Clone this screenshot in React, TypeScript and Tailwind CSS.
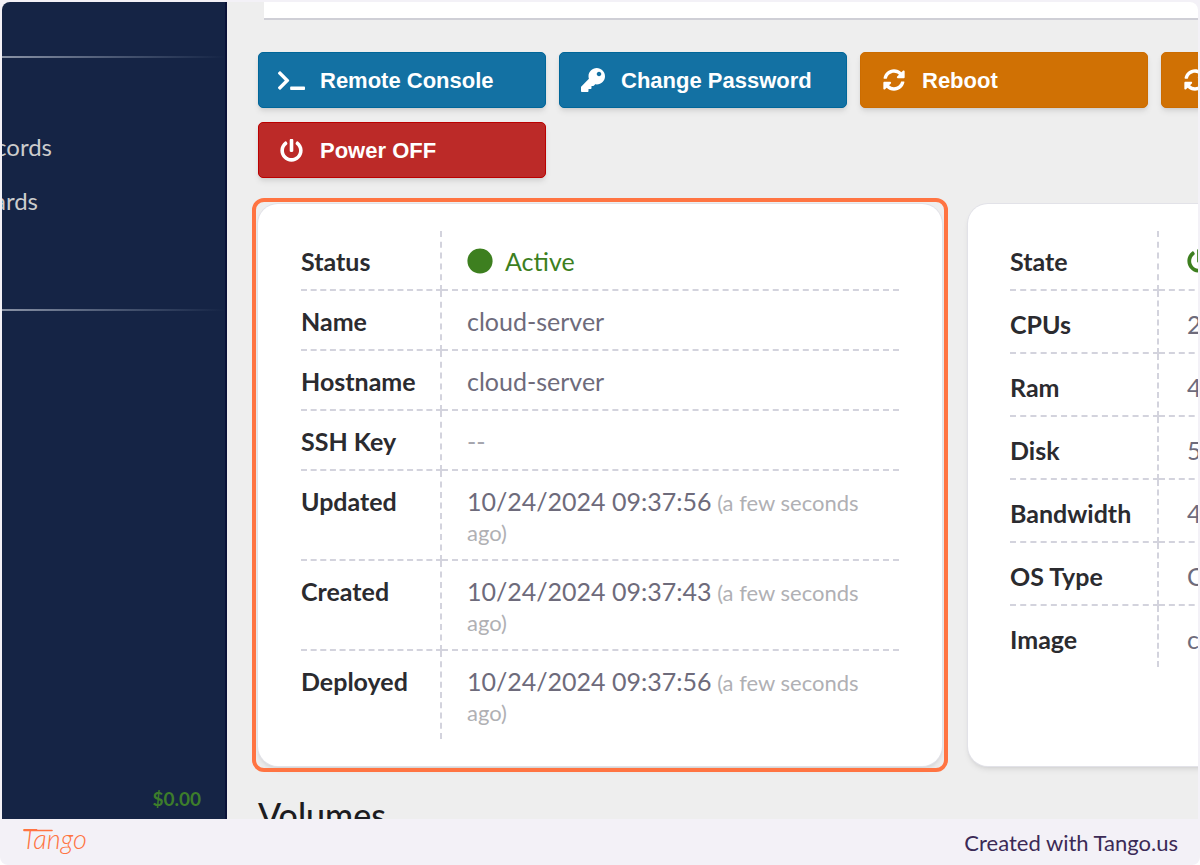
import React from 'react';
import { FaCircle, FaKey, FaPowerOff, FaSyncAlt, FaTerminal } from 'react-icons/fa';

interface Detail {
  label: string;
  value: React.ReactNode;
  note?: string;
}

const serverDetails: Detail[] = [
  {
    label: 'Status',
    value: (
      <span className="flex items-center gap-3 text-[#3d7f1f]">
        <FaCircle size={26} />
        Active
      </span>
    )
  },
  { label: 'Name', value: 'cloud-server' },
  { label: 'Hostname', value: 'cloud-server' },
  { label: 'SSH Key', value: <span className="text-[#a5a5ad]">--</span> },
  { label: 'Updated', value: '10/24/2024 09:37:56', note: '(a few seconds ago)' },
  { label: 'Created', value: '10/24/2024 09:37:43', note: '(a few seconds ago)' },
  { label: 'Deployed', value: '10/24/2024 09:37:56', note: '(a few seconds ago)' }
];

const hardwareDetails: Detail[] = [
  {
    label: 'State',
    value: (
      <span className="flex h-[30px] items-center text-[#3d7f1f]">
        <FaPowerOff size={24} />
      </span>
    )
  },
  { label: 'CPUs', value: '2' },
  { label: 'Ram', value: '4' },
  { label: 'Disk', value: '5' },
  { label: 'Bandwidth', value: '4' },
  { label: 'OS Type', value: 'C' },
  { label: 'Image', value: 'c' }
];

const actions = [
  { label: 'Remote Console', icon: FaTerminal, iconSize: 27, color: 'bg-[#1371a3] border-[#006699]' },
  { label: 'Change Password', icon: FaKey, iconSize: 24, color: 'bg-[#1371a3] border-[#006699]' },
  { label: 'Reboot', icon: FaSyncAlt, iconSize: 22, color: 'bg-[#d07104] border-[#cc6c00]' },
  { label: 'Reset', icon: FaSyncAlt, iconSize: 22, color: 'bg-[#d07104] border-[#cc6c00]' },
  { label: 'Power OFF', icon: FaPowerOff, iconSize: 23, color: 'bg-[#bc2a28] border-[#bb0000]' }
];

function Sidebar() {
  return (
    <aside className="flex w-[225px] shrink-0 flex-col overflow-hidden border-r-2 border-[#0a1238] bg-[#152445] text-2xl text-[#cccccc]">
      <div className="mt-[54px] h-[2px] shrink-0 bg-linear-to-r from-[#8a93a6] to-[#152445]" />
      <nav className="mt-[62px] flex flex-col">
        <a href="#records" className="flex h-[54px] w-[50px] items-center justify-end">cords</a>
        <a href="#cards" className="flex h-[54px] w-9 items-center justify-end">ards</a>
      </nav>
      <div className="mt-[81px] h-[2px] shrink-0 bg-linear-to-r from-[#8a93a6] to-[#152445]" />
      <div className="mt-auto pr-6 pb-2 text-right text-[19px] font-bold text-[#3d7d2b]">$0.00</div>
    </aside>
  );
}

interface DetailTableProps {
  rows: Detail[];
  labelWidth: string;
  rowPadding: string;
  valuePadding: string;
}

function DetailTable({ rows, labelWidth, rowPadding, valuePadding }: DetailTableProps) {
  return (
    <table className="w-full border-separate border-spacing-0 text-[25px] leading-[30px]">
      <tbody>
        {rows.map((row, i) => {
          const line = i === rows.length - 1 ? 'border-b-0' : 'border-b-2';
          const padding = i === 0 ? 'pt-[15px] pb-[13px]' : rowPadding;
          return (
            <tr key={row.label} className="align-top">
              <th
                scope="row"
                className={`${labelWidth} ${line} ${padding} border-r-2 border-dashed border-[#d3d3dd] text-left font-bold text-[#2b2b2f]`}
              >
                {row.label}
              </th>
              <td className={`${line} ${padding} ${valuePadding} border-dashed border-[#d3d3dd] text-[#6e6b7b]`}>
                {row.value}
                {row.note && <span className="text-[22px] leading-6 text-[#b0b0b4]"> {row.note}</span>}
              </td>
            </tr>
          );
        })}
      </tbody>
    </table>
  );
}

function TangoLogo() {
  return (
    <svg width="72" height="36" viewBox="0 0 72 36" role="img" aria-label="Tango">
      <path d="M2 6.5H30" stroke="#ff7442" strokeWidth="1.6" strokeLinecap="round" />
      <text x="0" y="25" fill="#ff7442" fontSize="27" fontWeight="300" fontStyle="italic" fontFamily="Lato, sans-serif">
        Tango
      </text>
    </svg>
  );
}

export default function App() {
  return (
    <div className="flex h-screen flex-col overflow-hidden rounded-b-lg bg-[#f3f1f7] px-[2px] pt-[2px] font-['Lato',sans-serif]">
      <div className="flex min-h-0 flex-1 overflow-hidden rounded-t-lg bg-[#eeeeee]">
        <Sidebar />

        <main className="min-w-0 flex-1 overflow-hidden pl-[31px]">
          <div className="ml-[6px] h-[18px] border-b-2 border-[#cfcfd6] bg-white" />

          {/* Server actions */}
          <div className="mt-8 flex w-[1394px] flex-wrap gap-x-[13px] gap-y-[14px]">
            {actions.map(({ label, icon: Icon, iconSize, color }) => (
              <button
                key={label}
                type="button"
                className={`${color} flex h-14 w-[288px] items-center gap-[15px] rounded-[5px] border pl-[19px] font-['Liberation_Sans',sans-serif] text-[22px] font-bold text-white shadow-md`}
              >
                <span className="flex w-[27px] justify-center">
                  <Icon size={iconSize} />
                </span>
                {label}
              </button>
            ))}
          </div>

          {/* Server details */}
          <div className="mt-[26px] grid w-[1394px] grid-cols-2 gap-[26px]">
            <section className="relative rounded-[20px] bg-white px-[43px] py-[27px] shadow-md ring-1 ring-[#e2e2e8]">
              <DetailTable
                rows={serverDetails}
                labelWidth="w-[141px]"
                rowPadding="pt-[15px] pb-[13px]"
                valuePadding="pl-[25px] pr-8"
              />
              <div className="pointer-events-none absolute -inset-[6px] rounded-xl border-4 border-[#ff7442]" />
            </section>
            <section className="rounded-[20px] bg-white px-[42px] py-[27px] shadow-md ring-1 ring-[#e2e2e8]">
              <DetailTable
                rows={hardwareDetails}
                labelWidth="w-[149px]"
                rowPadding="pt-[18px] pb-[13px]"
                valuePadding="pl-[28px]"
              />
            </section>
          </div>

          <h2 className="mt-6 text-[34px] leading-[50px] font-medium text-[#1c1c1f]">Volumes</h2>
        </main>
      </div>

      <footer className="flex h-[46px] shrink-0 items-center justify-between px-5 text-[22px] text-[#3b2a56]">
        <TangoLogo />
        <span>Created with Tango.us</span>
      </footer>
    </div>
  );
}
